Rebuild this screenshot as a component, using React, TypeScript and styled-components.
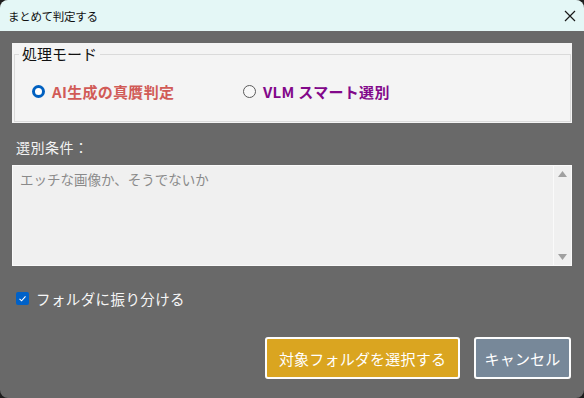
import React from "react";
import styled, { createGlobalStyle } from "styled-components";

const Global = createGlobalStyle`
  html, body { margin: 0; padding: 0; background: #1e1e1e; }
  body { font-family: "Noto Sans CJK JP", "Noto Sans", sans-serif; }
  * { box-sizing: border-box; }
`;

const Window = styled.div`
  width: 584px;
  height: 398px;
  border-radius: 8px;
  overflow: hidden;
  display: flex;
  flex-direction: column;
  background: #696969;
`;

const TitleBar = styled.div`
  height: 31px;
  flex: none;
  background: #e4f7f6;
  display: flex;
  align-items: center;
  justify-content: space-between;
  padding: 0 6px 0 8px;
`;

const Title = styled.span`
  font-size: 11.5px;
  color: #111;
  letter-spacing: -0.3px;
`;

const CloseBtn = styled.span`
  display: flex;
  align-items: center;
  justify-content: center;
  width: 16px;
  height: 16px;
`;

const Content = styled.div`
  flex: 1;
  padding: 12px 12px 0 12px;
  display: flex;
  flex-direction: column;
`;

const GroupPanel = styled.div`
  height: 80px;
  background: #f4f4f4;
  padding: 2px 1px 1px 2px;
  display: flex;
`;

const Fieldset = styled.fieldset`
  flex: 1;
  margin: 0;
  border: 1px solid #dadada;
  border-radius: 0;
  padding: 0;
  display: flex;
  align-items: center;
  min-width: 0;
  height: 77px;
`;

const Legend = styled.legend`
  font-size: 15px;
  color: #111;
  padding: 0 3px;
  margin-left: 4px;
  line-height: 18px;
`;

const RadioRow = styled.div`
  display: flex;
  align-items: center;
  margin: -1px 0 0 17px;
`;

const RadioItem = styled.label<{ $w: number }>`
  display: flex;
  align-items: center;
  gap: 7px;
  width: ${(p) => p.$w}px;
`;

const RadioCircle = styled.span<{ $on?: boolean }>`
  width: 13px;
  height: 13px;
  border-radius: 50%;
  flex: none;
  background: ${(p) => (p.$on ? "#fff" : "#f8f8f8")};
  border: ${(p) => (p.$on ? "3.5px solid #0060c0" : "1px solid #5a5a5a")};
`;

const RadioText = styled.span<{ $color: string }>`
  font-size: 15px;
  font-weight: bold;
  color: ${(p) => p.$color};
  letter-spacing: 0.3px;
`;

const FieldLabel = styled.div`
  margin-top: 14px;
  padding-left: 4px;
  font-size: 14px;
  color: #f2f2f2;
  line-height: 20px;
  letter-spacing: 0.5px;
`;

const TextBox = styled.div`
  margin-top: 8px;
  height: 101px;
  background: #f0f0f0;
  border: 1px solid #fafafa;
  display: flex;
`;

const Placeholder = styled.div`
  flex: 1;
  padding: 3px 7px;
  font-size: 13.5px;
  color: #8a8a8a;
  line-height: 20px;
`;

const ScrollBar = styled.div`
  width: 18px;
  border-left: 1px solid #fafafa;
  display: flex;
  flex-direction: column;
  justify-content: space-between;
  align-items: center;
  padding: 5px 0 5px 0;
`;

const CheckRow = styled.div`
  margin-top: 22px;
  display: flex;
  align-items: center;
  gap: 7px;
  padding-left: 4px;
`;

const CheckBox = styled.span`
  width: 13px;
  height: 13px;
  border-radius: 2px;
  background: #0061c8;
  display: flex;
  align-items: center;
  justify-content: center;
`;

const CheckText = styled.span`
  font-size: 14.5px;
  color: #f6f6f6;
  letter-spacing: 0.4px;
`;

const ButtonRow = styled.div`
  margin-top: 28px;
  display: flex;
  justify-content: flex-end;
  gap: 14px;
  padding-right: 1px;
`;

const Button = styled.button<{ $bg: string; $w: number }>`
  width: ${(p) => p.$w}px;
  height: 42px;
  background: ${(p) => p.$bg};
  border: 2px solid #fdfdfd;
  border-radius: 3px;
  color: #fff;
  font-family: "Noto Sans CJK JP", "Noto Sans", sans-serif;
  font-size: 15px;
  letter-spacing: 0.2px;
  padding: 0;
`;

export default function App() {
  return (
    <>
      <Global />
      <Window>
        <TitleBar>
          <Title>まとめて判定する</Title>
          <CloseBtn>
            <svg width="14" height="14" viewBox="0 0 14 14">
              <path d="M2 2 L12 12 M12 2 L2 12" stroke="#1a1a1a" strokeWidth="1.2" />
            </svg>
          </CloseBtn>
        </TitleBar>
        <Content>
          <GroupPanel>
            <Fieldset>
              <Legend>処理モード</Legend>
              <RadioRow>
                <RadioItem $w={211}>
                  <RadioCircle $on />
                  <RadioText $color="#d15b57">AI生成の真贋判定</RadioText>
                </RadioItem>
                <RadioItem $w={200}>
                  <RadioCircle />
                  <RadioText $color="#82088a">VLM スマート選別</RadioText>
                </RadioItem>
              </RadioRow>
            </Fieldset>
          </GroupPanel>
          <FieldLabel>選別条件：</FieldLabel>
          <TextBox>
            <Placeholder>エッチな画像か、そうでないか</Placeholder>
            <ScrollBar>
              <svg width="9" height="6" viewBox="0 0 9 6">
                <path d="M0 6 L4.5 0 L9 6 Z" fill="#a0a0a0" />
              </svg>
              <svg width="9" height="6" viewBox="0 0 9 6">
                <path d="M0 0 L4.5 6 L9 0 Z" fill="#a0a0a0" />
              </svg>
            </ScrollBar>
          </TextBox>
          <CheckRow>
            <CheckBox>
              <svg width="9" height="9" viewBox="0 0 9 9">
                <path d="M1.5 4.8 L3.6 6.8 L7.5 2.4" stroke="#fff" strokeWidth="1.1" fill="none" />
              </svg>
            </CheckBox>
            <CheckText>フォルダに振り分ける</CheckText>
          </CheckRow>
          <ButtonRow>
            <Button $bg="#daa520" $w={195}>対象フォルダを選択する</Button>
            <Button $bg="#778899" $w={97}>キャンセル</Button>
          </ButtonRow>
        </Content>
      </Window>
    </>
  );
}
